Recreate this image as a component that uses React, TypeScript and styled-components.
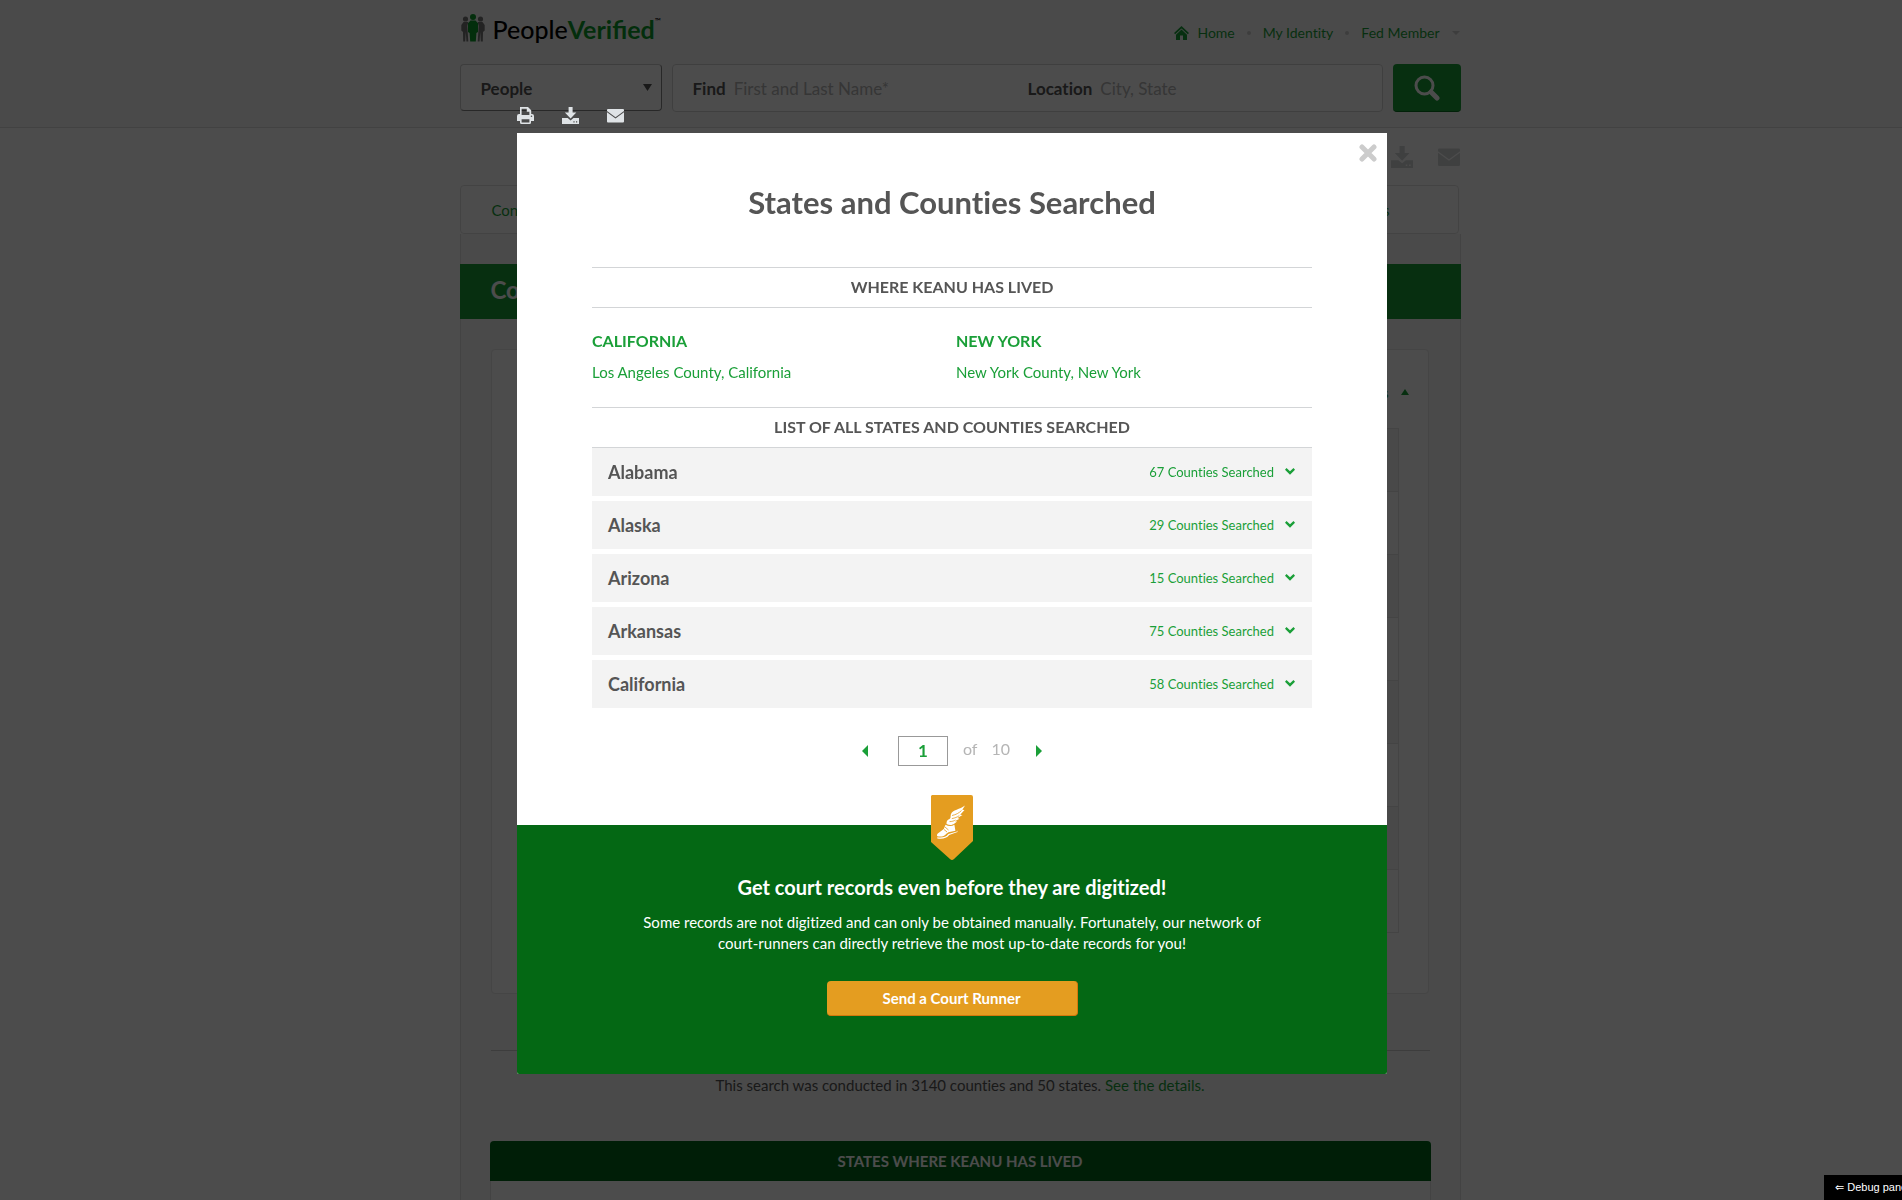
import React, { useState } from "react";
import styled, { createGlobalStyle } from "styled-components";

const green = "#1a9f38";
const sans = `Lato, "Open Sans", "Liberation Sans", sans-serif`;

const GlobalStyle = createGlobalStyle`
  *, *::before, *::after { box-sizing: border-box; }
  html, body { margin: 0; height: 100%; overflow: hidden; }
  body { background: #fff; color: #555; font-family: ${sans}; font-size: 15px; font-variant-ligatures: none; }
  h1, h2, h3, p, ul { margin: 0; padding: 0; }
  ul { list-style: none; }
  button, input, select { font-family: inherit; font-variant-ligatures: none; }
  a { color: ${green}; text-decoration: none; }
`;

/* ---------- page ---------- */

const Page = styled.div`
  width: calc(100% + 18px);
  height: 100vh;
  overflow: hidden;
`;

const Header = styled.header`
  background: #f9f9f9;
  border-bottom: 1px solid #dcdcdc;
  padding-bottom: 15px;
`;

const Container = styled.div`
  width: 100%;
  max-width: 1001px;
  margin: 0 auto;
`;

const TopRow = styled(Container)`
  height: 64px;
  display: flex;
  justify-content: space-between;
  align-items: center;
`;

const Logo = styled.a`
  display: flex;
  align-items: center;
  gap: 8px;
  padding: 0 0 8px 1px;
  color: #000;
  font: 500 25px/32px ${sans};
  b { color: #0a9a2a; font-weight: 700; }
  sup { font-size: 8px; line-height: 16px; }
`;

const LogoText = styled.span`
  display: flex;
  align-items: flex-start;
  padding-top: 2px;
`;

const TopNav = styled.nav`
  display: flex;
  align-items: center;
  gap: 12px;
  padding: 2px 1px 0 0;
`;

const NavLink = styled.a<{ $gap?: number }>`
  font-size: 14px;
  line-height: 20px;
  display: flex;
  align-items: center;
  gap: ${(p) => p.$gap ?? 0}px;
`;

const Dot = styled.i`
  width: 4px;
  height: 4px;
  border-radius: 50%;
  background: #ccc;
`;

const SearchForm = styled.form`
  display: flex;
  gap: 10px;
  height: 48px;
`;

const SelectWrap = styled.label`
  position: relative;
  width: 202px;
  height: 47px;
  svg { position: absolute; right: 10px; top: 20px; pointer-events: none; }
`;

const TypeSelect = styled.select`
  width: 100%;
  height: 100%;
  appearance: none;
  border: 1px solid #ccc;
  border-right-color: #888;
  border-bottom-color: #888;
  border-radius: 4px;
  background: #fff;
  padding: 2px 20px 0;
  font-size: 17px;
  font-weight: 700;
  color: #555;
`;

const Fields = styled.div`
  flex: 1;
  height: 48px;
  display: flex;
  border: 1px solid #d4d4d4;
  border-radius: 4px;
  background: #fff;
  padding: 1px 0 0 20px;
`;

const Field = styled.label<{ $grow?: boolean }>`
  display: flex;
  align-items: center;
  gap: 8px;
  flex: ${(p) => (p.$grow ? "1" : "0 0 335px")};
  font-size: 17px;
  font-weight: 700;
  color: #555;
  input {
    flex: 1;
    min-width: 0;
    border: 0;
    padding: 0;
    background: transparent;
    font-size: 17px;
    color: #555;
  }
  input::placeholder { color: #b4b4b4; opacity: 1; }
`;

const SearchButton = styled.button`
  width: 68px;
  height: 48px;
  border: 0;
  border-radius: 4px;
  background: ${green};
  border-bottom: 1px solid #08701f;
  color: #fff;
  padding: 0;
  display: grid;
  place-items: center;
`;

const PageTools = styled(Container)`
  height: 57px;
  padding-right: 1px;
  display: flex;
  align-items: center;
  justify-content: flex-end;
  gap: 25px;
  color: #d3d6d8;
`;

const Tabs = styled.nav`
  display: flex;
  justify-content: space-between;
  align-items: center;
  height: 49px;
  border: 1px solid #e2e2e2;
  border-radius: 4px;
  background: #fff;
  padding: 0 68px 0 31px;
  margin-right: 2px;
`;

const Panel = styled.main`
  background: #f7f7f7;
  border: solid #e2e2e2;
  border-width: 0 1px;
  padding-top: 30px;
`;

const PanelTitle = styled.h2`
  margin: 0 -1px;
  height: 55px;
  padding-left: 31px;
  background: ${green};
  color: #fff;
  font-size: 24px;
  line-height: 52px;
`;

const Card = styled.section`
  margin: 30px 31px 56px 30px;
  border: 1px solid #e6e6e6;
  border-radius: 4px;
  background: #fff;
  padding: 0 29px 60px;
`;

const CardHead = styled.div`
  height: 78px;
  margin-right: -10px;
  padding-top: 6px;
  display: flex;
  align-items: center;
  justify-content: flex-end;
  gap: 12px;
  font-size: 14px;
`;

const Stripe = styled.li`
  height: 63px;
  border: 1px solid #e3e3e3;
  border-bottom-width: 0;
  background: #fff;
  &:nth-child(odd) { background: #f4f4f4; }
  &:last-child { height: 64px; border-bottom-width: 1px; }
`;

const Conducted = styled.p`
  margin: 0 30px 44px;
  border-top: 1px solid #ccc;
  padding-top: 22px;
  text-align: center;
  font-size: 15px;
  line-height: 24px;
  color: #555;
`;

const LivedTitle = styled.h3`
  margin: 0 29px;
  height: 40px;
  border-radius: 4px 4px 0 0;
  background: #006718;
  color: #fff;
  text-align: center;
  font-size: 15px;
  line-height: 40px;
`;

const LivedBody = styled.div`
  margin: 0 29px;
  height: 100px;
  border: solid #e2e2e2;
  border-width: 0 1px;
  background: #fff;
`;

/* ---------- modal ---------- */

const Overlay = styled.div`
  position: fixed;
  inset: 0;
  overflow: hidden;
  background: rgba(0, 0, 0, 0.7);
  padding: 107px 2px 0 4px;
`;

const ModalColumn = styled.div`
  width: 100%;
  max-width: 870px;
  margin: 0 auto;
`;

const ModalTools = styled.div`
  display: flex;
  gap: 28px;
  height: 26px;
  color: #dfe3e6;
`;

const IconButton = styled.button`
  border: 0;
  padding: 0;
  background: none;
  color: inherit;
  display: flex;
  align-items: flex-start;
`;

const Dialog = styled.section`
  position: relative;
  background: #fff;
  border-radius: 0 0 2px 2px;
  overflow: hidden;
`;

const CloseButton = styled(IconButton)`
  position: absolute;
  top: 11px;
  right: 10px;
  color: #ccc;
`;

const DialogBody = styled.div`
  padding: 51px 75px 59px;
`;

const Title = styled.h1`
  font-size: 31px;
  line-height: 36px;
  text-align: center;
  margin-bottom: 47px;
`;

const SectionTitle = styled.h2`
  border: solid #d3d5d7;
  border-width: 1px 0;
  height: 41px;
  font-size: 16px;
  line-height: 37px;
  text-align: center;
`;

const Lived = styled.div`
  display: grid;
  grid-template-columns: 1fr 1fr;
  gap: 8px;
  padding: 21px 0 23px;
`;

const LivedState = styled.div`
  display: flex;
  flex-direction: column;
  align-items: flex-start;
  gap: 7px;
  line-height: 24px;
  h3 { font-size: 16px; color: ${green}; }
  a { font-size: 15px; }
`;

const StateList = styled.ul`
  display: flex;
  flex-direction: column;
  gap: 5px;
`;

const StateRow = styled.button`
  width: 100%;
  height: 48px;
  border: 0;
  background: #f3f3f3;
  padding: 0 17px 1px 16px;
  display: flex;
  align-items: center;
  color: ${green};
`;

const StateName = styled.span`
  flex: 1;
  text-align: left;
  font-size: 18px;
  font-weight: 700;
  color: #555;
`;

const CountyCount = styled.span`
  font-size: 13px;
  margin-right: 11px;
`;

const Pager = styled.div`
  display: flex;
  justify-content: center;
  align-items: center;
  margin-top: 28px;
  height: 30px;
  color: ${green};
`;

const PageInput = styled.input`
  width: 50px;
  height: 30px;
  margin: 0 15px 0 30px;
  border: 1px solid #999;
  padding: 0 0 2px;
  text-align: center;
  font-size: 17px;
  font-weight: 700;
  color: ${green};
`;

const PageTotal = styled.span`
  color: #b5b5b5;
  font-size: 16px;
  line-height: 24px;
  padding-bottom: 4px;
  display: flex;
  gap: 14px;
  margin-right: 26px;
`;

const Promo = styled.div`
  position: relative;
  background: #046814;
  color: #fff;
  text-align: center;
  padding: 48px 75px 58px;
  h2 { font-size: 20px; line-height: 28px; margin-bottom: 11px; }
  p { font-size: 15px; line-height: 21px; max-width: 640px; margin: 0 auto 27px; }
`;

const Ribbon = styled.svg`
  position: absolute;
  top: -30px;
  left: 50%;
  margin-left: -21px;
`;

const RunnerButton = styled.button`
  width: 251px;
  height: 35px;
  border: 0;
  border-bottom: 1px solid #d4770c;
  border-right: 1px solid #d4770c;
  border-radius: 4px;
  background: #e49d20;
  color: #fff;
  font-size: 15px;
  font-weight: 700;
  padding: 0;
`;

const DebugPanel = styled.button`
  position: fixed;
  right: -18px;
  bottom: 0;
  width: 96px;
  height: 25px;
  border: 0;
  padding: 0 0 0 11px;
  background: #000;
  color: #fff;
  text-align: left;
  white-space: nowrap;
  font: 11px/25px "Liberation Sans", "DejaVu Sans", sans-serif;
`;

/* ---------- icons ---------- */

const PrintIcon = ({ size }: { size: number }) => (
  <svg width={size} height={size} viewBox="0 0 17 17" fill="currentColor" fillRule="evenodd">
    <path d="M3 0h8l3.2 3.2V7H15a2 2 0 0 1 2 2v5h-3v1.500a1.500 1.500 0 0 1-1.500 1.500h-8A1.500 1.500 0 0 1 3 15.500V14H0V9a2 2 0 0 1 2-2h1zM4.600 1.700V8h7.800V4.700H9.800V1.700zM4.600 12.200v3.200h7.800v-3.200zM14.500 8.400a.8.8 0 1 0 0 1.600.8.8 0 0 0 0-1.600z" />
  </svg>
);

const DownloadIcon = ({ size }: { size: number }) => (
  <svg width={size} height={size} viewBox="0 0 17 17" fill="currentColor" fillRule="evenodd">
    <path d="M6.600 0h4v5.500h3.700L8.600 11.400 2.900 5.500h3.700z" />
    <path d="M0 11h5.700l2.900 2.400L11.500 11H17v6H0zM11.400 14.200v1.200h1.200v-1.200zM14 14.200v1.200h1.200v-1.200z" />
  </svg>
);

const MailIcon = ({ size }: { size: number }) => (
  <svg width={size} height={size} viewBox="0 0 17 17" fill="currentColor">
    <path d="M1 2h15a1 1 0 0 1 1 1v1L8.500 10.200 0 4V3a1 1 0 0 1 1-1z" />
    <path d="M0 5.300l8.500 6.100L17 5.300V14.500a1 1 0 0 1-1 1H1a1 1 0 0 1-1-1z" />
  </svg>
);

const HomeIcon = () => (
  <svg width="15" height="14" viewBox="0 0 15 14" fill={green}>
    <path d="M7.500 0 15 7l-1.200 1.200L7.500 2.400 1.200 8.200 0 7z" />
    <path d="M7.500 3.600 13 8.700V14H9V9.500H6V14H2V8.700z" />
  </svg>
);

const SearchIcon = () => (
  <svg width="26" height="26" viewBox="0 0 26 26" fill="none" stroke="currentColor">
    <circle cx="10.500" cy="10.500" r="8.500" strokeWidth="3" />
    <path d="M17 17l6 6" strokeWidth="5" strokeLinecap="round" />
  </svg>
);

const CloseIcon = () => (
  <svg width="18" height="18" viewBox="0 0 18 18" fill="none" stroke="currentColor" strokeWidth="5" strokeLinecap="round">
    <path d="M3 3l12 12M15 3 3 15" />
  </svg>
);

const ChevronIcon = () => (
  <svg width="10" height="7" viewBox="0 0 10 7" fill="currentColor">
    <path d="M1.500 0 5 3.300 8.500 0 10 1.700 5 6.700 0 1.700z" />
  </svg>
);

const Triangle = ({ points, w, h, fill = "currentColor" }: { points: string; w: number; h: number; fill?: string }) => (
  <svg width={w} height={h} fill={fill}>
    <polygon points={points} />
  </svg>
);

const PeopleIcon = () => (
  <svg width="24" height="28" viewBox="0 0 24 28">
    <g fill="#777">
      <circle cx="4.500" cy="5" r="2.600" />
      <circle cx="19.500" cy="5" r="2.600" />
      <path d="M2.500 8h4.800L6.300 12l1 15.500H5.400L4.800 18l-.6 9.500H2.200L2 18 .3 16.500V11z" />
      <path d="M21.500 8h-4.800l1 4-1 15.500h1.900l.6-9.500.6 9.500h2L22 18l1.700-1.500V11z" />
    </g>
    <g fill="#0a9a2a">
      <circle cx="12" cy="3" r="3" />
      <path d="M9.500 6.500h5L17 9.300V18l-1.600 1-.6 8.500H9.200L8.600 19 7 18V9.300z" />
    </g>
  </svg>
);

const WingedShoeRibbon = () => (
  <Ribbon width="42" height="65" viewBox="0 0 42 65" aria-hidden="true">
    <path fill="#e49d20" d="M1 0h39a2 2 0 0 1 2 2v44L23 64q-2 2-4 0L0 47V1z" />
    <g fill="#fff">
      <path d="M34 10.500C29 14.500 21.500 14.500 19.800 19.500c-.4 2 .2 3.500-1.300 4.500-2.400.8-3 2-3 5 3 1.500 5.500 1.500 8-.4l2.600-2.200-2.200-.2 4.600-2.400-2-.7 5-3.200-2.300-.2L33.500 15l-2.200-.2z" />
      <path d="M14.500 29.800 12.800 34l-6 4.500c-1 1-1 2-.4 2.800 4 .8 7-.2 9-2.600l2-1.500 7-1.400-1-6c-2.400 1.600-6 1.600-8.900 0z" />
      <path d="M6.300 42.300c5 .6 8.500 0 11-3.300l8.700-2.600.2-1.200.3 1.900-8.300 3c-2.600 3.300-7 4.200-11.900 3.300z" />
    </g>
    <g fill="none" stroke="#e49d20" strokeWidth="0.800">
      <path d="M21 20.500c4-.8 7-2.500 9.500-5M20.800 23.600c3-.5 5.500-1.500 7.500-3M18.500 26.600c2.500 0 4.500-.6 6-1.600M13 34.500l3 2.500M14 32l3.500 3" />
    </g>
  </Ribbon>
);

/* ---------- data ---------- */

const states = [
  { name: "Alabama", count: 67 },
  { name: "Alaska", count: 29 },
  { name: "Arizona", count: 15 },
  { name: "Arkansas", count: 75 },
  { name: "California", count: 58 },
];

const lived = [
  { state: "California", county: "Los Angeles County, California" },
  { state: "New York", county: "New York County, New York" },
];

export default function App() {
  const [page, setPage] = useState("1");

  return (
    <>
      <GlobalStyle />
      <Page>
        <Header>
          <TopRow>
            <Logo href="#">
              <PeopleIcon />
              <LogoText>
                People<b>Verified</b>
                <sup>™</sup>
              </LogoText>
            </Logo>
            <TopNav>
              <NavLink href="#" $gap={8}><HomeIcon />Home</NavLink>
              <Dot />
              <NavLink href="#">My Identity</NavLink>
              <Dot />
              <NavLink href="#" $gap={12}>Fed Member <Triangle points="0,0 8,0 4,4" w={8} h={4} fill="#ccc" /></NavLink>
            </TopNav>
          </TopRow>
          <Container>
            <SearchForm onSubmit={(e) => e.preventDefault()}>
              <SelectWrap>
                <TypeSelect aria-label="Search type"><option>People</option></TypeSelect>
                <Triangle points="0,0 9,0 4.5,7" w={9} h={7} fill="#555" />
              </SelectWrap>
              <Fields>
                <Field>Find <input placeholder="First and Last Name*" /></Field>
                <Field $grow>Location <input placeholder="City, State" /></Field>
              </Fields>
              <SearchButton aria-label="Search"><SearchIcon /></SearchButton>
            </SearchForm>
          </Container>
        </Header>
        <PageTools>
          <DownloadIcon size={22} />
          <MailIcon size={22} />
        </PageTools>
        <Container>
          <Tabs>
            <a href="#">Contact</a>
            <a href="#">Records</a>
          </Tabs>
          <Panel>
            <PanelTitle>Court Records</PanelTitle>
            <Card>
              <CardHead>
                <a href="#">Details</a>
                <Triangle points="4,0 8,6 0,6" w={8} h={6} fill={green} />
              </CardHead>
              <ul>
                {Array.from({ length: 8 }, (_, i) => <Stripe key={i} />)}
              </ul>
            </Card>
            <Conducted>
              This search was conducted in 3140 counties and 50 states. <a href="#">See the details.</a>
            </Conducted>
            <LivedTitle>STATES WHERE KEANU HAS LIVED</LivedTitle>
            <LivedBody />
          </Panel>
        </Container>
      </Page>

      <Overlay>
        <ModalColumn>
          <ModalTools>
            <IconButton aria-label="Print"><PrintIcon size={17} /></IconButton>
            <IconButton aria-label="Download"><DownloadIcon size={17} /></IconButton>
            <IconButton aria-label="Email"><MailIcon size={17} /></IconButton>
          </ModalTools>
          <Dialog role="dialog" aria-labelledby="dialog-title">
            <CloseButton aria-label="Close"><CloseIcon /></CloseButton>
            <DialogBody>
              <Title id="dialog-title">States and Counties Searched</Title>
              <SectionTitle>WHERE KEANU HAS LIVED</SectionTitle>
              <Lived>
                {lived.map((l) => (
                  <LivedState key={l.state}>
                    <h3>{l.state.toUpperCase()}</h3>
                    <a href="#">{l.county}</a>
                  </LivedState>
                ))}
              </Lived>
              <SectionTitle>LIST OF ALL STATES AND COUNTIES SEARCHED</SectionTitle>
              <StateList>
                {states.map((s) => (
                  <li key={s.name}>
                    <StateRow>
                      <StateName>{s.name}</StateName>
                      <CountyCount>{s.count} Counties Searched</CountyCount>
                      <ChevronIcon />
                    </StateRow>
                  </li>
                ))}
              </StateList>
              <Pager>
                <IconButton aria-label="Previous page"><Triangle points="6,0 6,12 0,6" w={6} h={12} /></IconButton>
                <PageInput aria-label="Page" value={page} onChange={(e) => setPage(e.target.value)} />
                <PageTotal><span>of</span><span>10</span></PageTotal>
                <IconButton aria-label="Next page"><Triangle points="0,0 6,6 0,12" w={6} h={12} /></IconButton>
              </Pager>
            </DialogBody>
            <Promo>
              <WingedShoeRibbon />
              <h2>Get court records even before they are digitized!</h2>
              <p>
                Some records are not digitized and can only be obtained manually. Fortunately, our network of
                court-runners can directly retrieve the most up-to-date records for you!
              </p>
              <RunnerButton>Send a Court Runner</RunnerButton>
            </Promo>
          </Dialog>
        </ModalColumn>
      </Overlay>
      <DebugPanel>⇐ Debug panel</DebugPanel>
    </>
  );
}
